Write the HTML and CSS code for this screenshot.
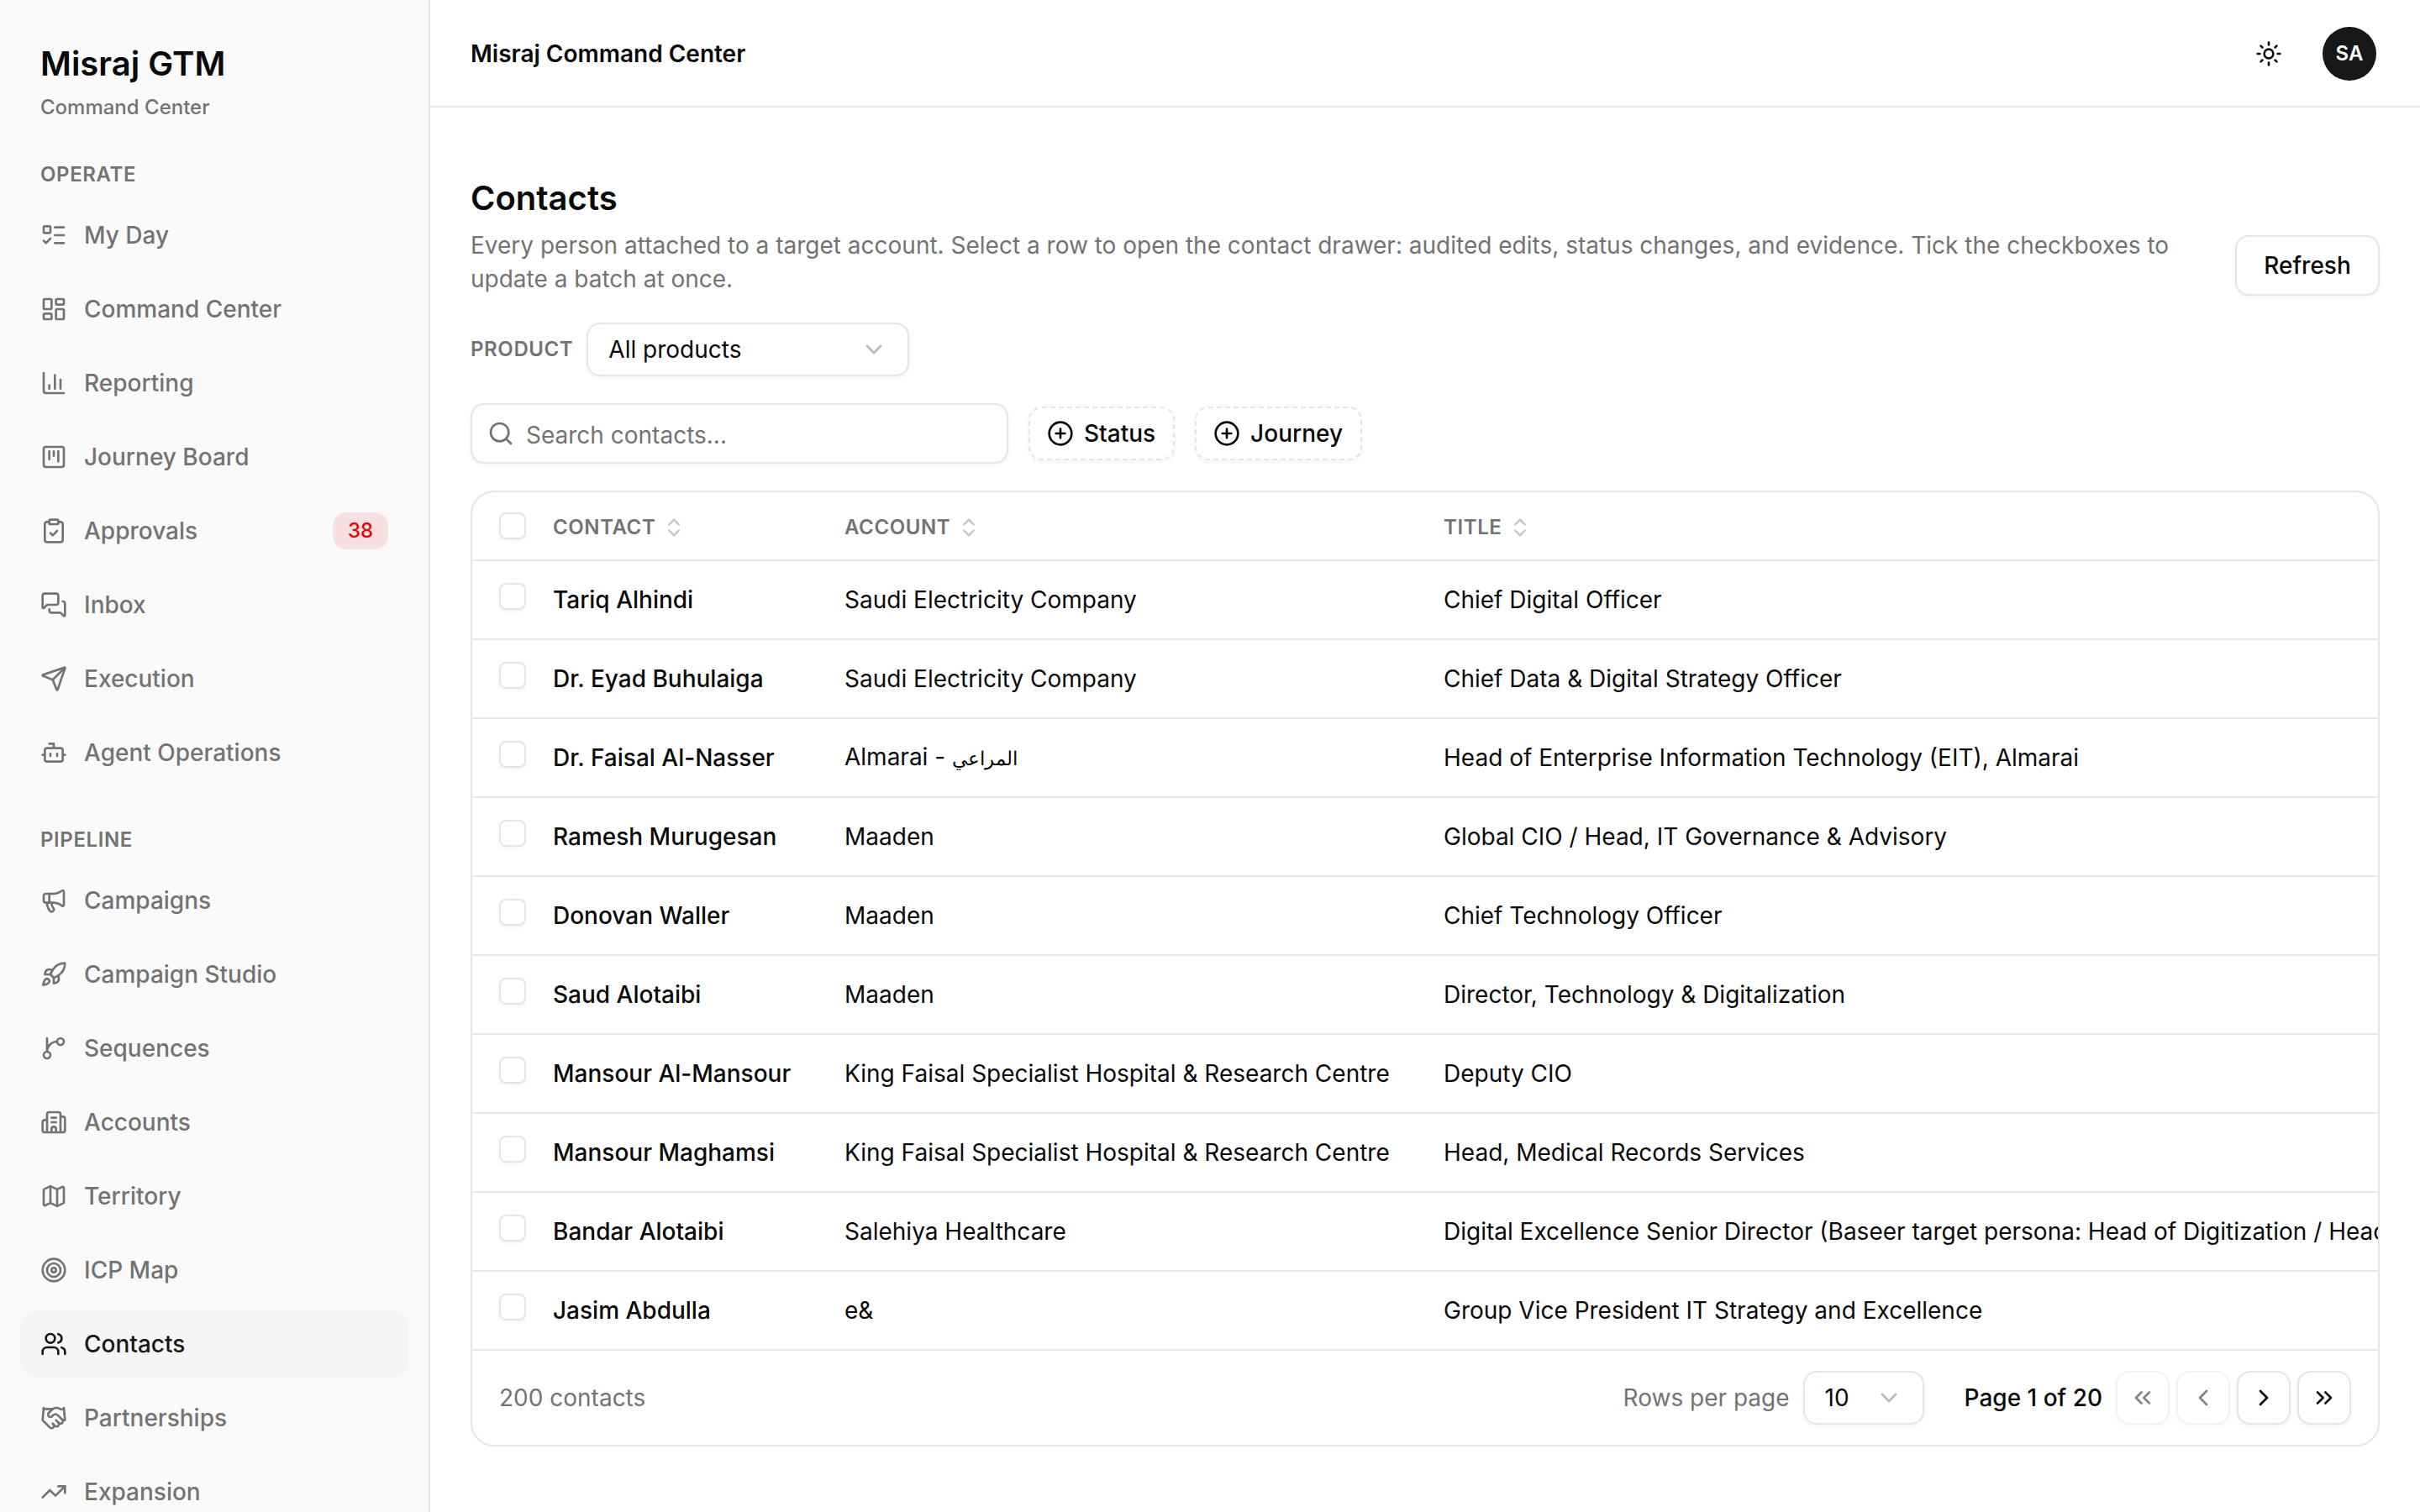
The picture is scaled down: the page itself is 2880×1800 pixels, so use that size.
FILE: index.html
```html
<!DOCTYPE html>
<html lang="en">
	<head>
		<meta charset="utf-8">
		<title>Misraj Command Center</title>
		<link rel="stylesheet" href="styles.css">
	</head>
	<body>
		<svg class="sprite">
			<symbol id="i-sort" viewBox="0 0 24 24"><path d="m7 15 5 5 5-5"/><path d="m7 9 5-5 5 5"/></symbol>
			<symbol id="i-down" viewBox="0 0 24 24"><path d="m6 9 6 6 6-6"/></symbol>
			<symbol id="i-plus" viewBox="0 0 24 24"><circle cx="12" cy="12" r="10"/><path d="M8 12h8M12 8v8"/></symbol>
		</svg>

		<div class="app">
			<aside class="sidebar">
				<div class="brand">
					<div class="brand-name">Misraj GTM</div>
					<div class="brand-sub">Command Center</div>
				</div>

				<nav class="group">
					<div class="group-label">Operate</div>
					<a class="nav-item"><svg class="icon" viewBox="0 0 24 24"><path d="M13 5h8M13 12h8M13 19h8M3 17l2 2 4-4"/><rect x="3" y="4" width="6" height="6" rx="1"/></svg>My Day</a>
					<a class="nav-item"><svg class="icon" viewBox="0 0 24 24"><rect width="7" height="9" x="3" y="3" rx="1"/><rect width="7" height="5" x="14" y="3" rx="1"/><rect width="7" height="9" x="14" y="12" rx="1"/><rect width="7" height="5" x="3" y="16" rx="1"/></svg>Command Center</a>
					<a class="nav-item"><svg class="icon" viewBox="0 0 24 24"><path d="M3 3v16a2 2 0 0 0 2 2h16M18 17V9M13 17V5M8 17v-3"/></svg>Reporting</a>
					<a class="nav-item"><svg class="icon" viewBox="0 0 24 24"><rect width="18" height="18" x="3" y="3" rx="2"/><path d="M8 7v7M12 7v4M16 7v9"/></svg>Journey Board</a>
					<a class="nav-item"><svg class="icon" viewBox="0 0 24 24"><rect width="8" height="4" x="8" y="2" rx="1"/><path d="M16 4h2a2 2 0 0 1 2 2v14a2 2 0 0 1-2 2H6a2 2 0 0 1-2-2V6a2 2 0 0 1 2-2h2"/><path d="m9 14 2 2 4-4"/></svg>Approvals<span class="badge">38</span></a>
					<a class="nav-item"><svg class="icon" viewBox="0 0 24 24"><path d="M16 10a2 2 0 0 1-2 2H6.828a2 2 0 0 0-1.414.586l-2.202 2.202A.71.71 0 0 1 2 14.286V4a2 2 0 0 1 2-2h10a2 2 0 0 1 2 2z"/><path d="M20 9a2 2 0 0 1 2 2v10.286a.71.71 0 0 1-1.212.502l-2.202-2.202A2 2 0 0 0 17.172 19H10a2 2 0 0 1-2-2v-1"/></svg>Inbox</a>
					<a class="nav-item"><svg class="icon" viewBox="0 0 24 24"><path d="M14.536 21.686a.5.5 0 0 0 .937-.024l6.5-19a.496.496 0 0 0-.635-.635l-19 6.5a.5.5 0 0 0-.024.937l7.93 3.18a2 2 0 0 1 1.112 1.11z"/><path d="m21.854 2.147-10.94 10.939"/></svg>Execution</a>
					<a class="nav-item"><svg class="icon" viewBox="0 0 24 24"><path d="M12 8V4H8"/><rect width="16" height="12" x="4" y="8" rx="2"/><path d="M2 14h2M20 14h2M15 13v2M9 13v2"/></svg>Agent Operations</a>
				</nav>

				<nav class="group">
					<div class="group-label">Pipeline</div>
					<a class="nav-item"><svg class="icon" viewBox="0 0 24 24"><path d="M11 6a13 13 0 0 0 8.4-2.8A1 1 0 0 1 21 4v12a1 1 0 0 1-1.6.8A13 13 0 0 0 11 14H5a2 2 0 0 1-2-2V8a2 2 0 0 1 2-2z"/><path d="M6 14a12 12 0 0 0 2.4 7.2 2 2 0 0 0 3.2-2.4A8 8 0 0 1 10 14"/><path d="M8 6v8"/></svg>Campaigns</a>
					<a class="nav-item"><svg class="icon" viewBox="0 0 24 24"><path d="M12 15v5s3.03-.55 4-2c1.08-1.62 0-5 0-5"/><path d="M4.5 16.5c-1.5 1.26-2 5-2 5s3.74-.5 5-2c.71-.84.7-2.13-.09-2.91a2.18 2.18 0 0 0-2.91-.09"/><path d="M9 12a22 22 0 0 1 2-3.95A12.88 12.88 0 0 1 22 2c0 2.72-.78 7.5-6 11a22.4 22.4 0 0 1-4 2z"/><path d="M9 12H4s.55-3.03 2-4c1.62-1.08 5 .05 5 .05"/></svg>Campaign Studio</a>
					<a class="nav-item"><svg class="icon" viewBox="0 0 24 24"><path d="M15 6a9 9 0 0 0-9 9V3"/><circle cx="18" cy="6" r="3"/><circle cx="6" cy="18" r="3"/></svg>Sequences</a>
					<a class="nav-item"><svg class="icon" viewBox="0 0 24 24"><path d="M10 12h4M10 8h4M14 21v-3a2 2 0 0 0-4 0v3"/><path d="M6 10H4a2 2 0 0 0-2 2v7a2 2 0 0 0 2 2h16a2 2 0 0 0 2-2V9a2 2 0 0 0-2-2h-2"/><path d="M6 21V5a2 2 0 0 1 2-2h8a2 2 0 0 1 2 2v16"/></svg>Accounts</a>
					<a class="nav-item"><svg class="icon" viewBox="0 0 24 24"><path d="M14.106 5.553a2 2 0 0 0 1.788 0l3.659-1.83A1 1 0 0 1 21 4.619v12.764a1 1 0 0 1-.553.894l-4.553 2.277a2 2 0 0 1-1.788 0l-4.212-2.106a2 2 0 0 0-1.788 0l-3.659 1.83A1 1 0 0 1 3 19.381V6.618a1 1 0 0 1 .553-.894l4.553-2.277a2 2 0 0 1 1.788 0z"/><path d="M15 5.764v15M9 3.236v15"/></svg>Territory</a>
					<a class="nav-item"><svg class="icon" viewBox="0 0 24 24"><circle cx="12" cy="12" r="10"/><circle cx="12" cy="12" r="6"/><circle cx="12" cy="12" r="2"/></svg>ICP Map</a>
					<a class="nav-item active"><svg class="icon" viewBox="0 0 24 24"><path d="M16 21v-2a4 4 0 0 0-4-4H6a4 4 0 0 0-4 4v2"/><path d="M16 3.128a4 4 0 0 1 0 7.744"/><path d="M22 21v-2a4 4 0 0 0-3-3.87"/><circle cx="9" cy="7" r="4"/></svg>Contacts</a>
					<a class="nav-item"><svg class="icon" viewBox="0 0 24 24"><path d="m11 17 2 2a1 1 0 1 0 3-3"/><path d="m14 14 2.5 2.5a1 1 0 1 0 3-3l-3.88-3.88a3 3 0 0 0-4.24 0l-.88.88a1 1 0 1 1-3-3l2.81-2.81a5.79 5.79 0 0 1 7.06-.87l.47.28a2 2 0 0 0 1.42.25L21 4"/><path d="m21 3 1 11h-2"/><path d="M3 3 2 14l6.5 6.5a1 1 0 1 0 3-3"/><path d="M3 4h8"/></svg>Partnerships</a>
					<a class="nav-item"><svg class="icon" viewBox="0 0 24 24"><path d="M16 7h6v6"/><path d="m22 7-8.5 8.5-5-5L2 17"/></svg>Expansion</a>
				</nav>
			</aside>

			<div class="main">
				<header class="topbar">
					<div class="topbar-title">Misraj Command Center</div>
					<div class="topbar-actions">
						<button class="theme-btn"><svg class="icon" viewBox="0 0 24 24"><circle cx="12" cy="12" r="4"/><path d="M12 2v2M12 20v2m-7.07-17.07 1.41 1.41m11.32 11.32 1.41 1.41M2 12h2M20 12h2M6.34 17.66l-1.41 1.41M19.07 4.93l-1.41 1.41"/></svg></button>
						<div class="avatar">SA</div>
					</div>
				</header>

				<main class="content">
					<div class="page-head">
						<div class="page-text">
							<h1>Contacts</h1>
							<p>Every person attached to a target account. Select a row to open the contact drawer: audited edits, status changes, and evidence. Tick the checkboxes to update a batch at once.</p>
						</div>
						<button class="btn refresh">Refresh</button>
					</div>

					<div class="product-row">
						<span class="label">Product</span>
						<div class="select product-select">All products<svg class="icon dim"><use href="#i-down"/></svg></div>
					</div>

					<div class="toolbar">
						<div class="search">
							<svg class="icon" viewBox="0 0 24 24"><path d="m21 21-4.34-4.34"/><circle cx="11" cy="11" r="8"/></svg>
							<span>Search contacts...</span>
						</div>
						<button class="btn filter"><svg class="icon"><use href="#i-plus"/></svg>Status</button>
						<button class="btn filter"><svg class="icon"><use href="#i-plus"/></svg>Journey</button>
					</div>

					<div class="card">
						<div class="table-wrap">
							<table>
								<colgroup><col class="c-check"><col class="c-contact"><col class="c-account"><col class="c-title"></colgroup>
								<thead>
									<tr>
										<th><div class="checkbox"></div></th>
										<th><div class="th">Contact<svg class="icon sort"><use href="#i-sort"/></svg></div></th>
										<th><div class="th">Account<svg class="icon sort"><use href="#i-sort"/></svg></div></th>
										<th><div class="th">Title<svg class="icon sort"><use href="#i-sort"/></svg></div></th>
									</tr>
								</thead>
								<tbody>
									<tr><td><div class="checkbox"></div></td><td class="name">Tariq Alhindi</td><td>Saudi Electricity Company</td><td>Chief Digital Officer</td></tr>
									<tr><td><div class="checkbox"></div></td><td class="name">Dr. Eyad Buhulaiga</td><td>Saudi Electricity Company</td><td>Chief Data &amp; Digital Strategy Officer</td></tr>
									<tr><td><div class="checkbox"></div></td><td class="name">Dr. Faisal Al-Nasser</td><td>Almarai - <span class="ar">المراعي</span></td><td>Head of Enterprise Information Technology (EIT), Almarai</td></tr>
									<tr><td><div class="checkbox"></div></td><td class="name">Ramesh Murugesan</td><td>Maaden</td><td>Global CIO / Head, IT Governance &amp; Advisory</td></tr>
									<tr><td><div class="checkbox"></div></td><td class="name">Donovan Waller</td><td>Maaden</td><td>Chief Technology Officer</td></tr>
									<tr><td><div class="checkbox"></div></td><td class="name">Saud Alotaibi</td><td>Maaden</td><td>Director, Technology &amp; Digitalization</td></tr>
									<tr><td><div class="checkbox"></div></td><td class="name">Mansour Al-Mansour</td><td>King Faisal Specialist Hospital &amp; Research Centre</td><td>Deputy CIO</td></tr>
									<tr><td><div class="checkbox"></div></td><td class="name">Mansour Maghamsi</td><td>King Faisal Specialist Hospital &amp; Research Centre</td><td>Head, Medical Records Services</td></tr>
									<tr><td><div class="checkbox"></div></td><td class="name">Bandar Alotaibi</td><td>Salehiya Healthcare</td><td>Digital Excellence Senior Director (Baseer target persona: Head of Digitization / Head</td></tr>
									<tr><td><div class="checkbox"></div></td><td class="name">Jasim Abdulla</td><td>e&amp;</td><td>Group Vice President IT Strategy and Excellence</td></tr>
								</tbody>
							</table>
						</div>

						<div class="card-foot">
							<span class="muted">200 contacts</span>
							<div class="pager">
								<div class="rows-per">
									<span class="muted">Rows per page</span>
									<div class="select size-select">10<svg class="icon dim"><use href="#i-down"/></svg></div>
								</div>
								<div class="pages">
									<span class="page-of">Page 1 of 20</span>
									<div class="page-btns">
										<button class="btn page-btn off"><svg class="icon" viewBox="0 0 24 24"><path d="m11 17-5-5 5-5M18 17l-5-5 5-5"/></svg></button>
										<button class="btn page-btn off"><svg class="icon" viewBox="0 0 24 24"><path d="m15 18-6-6 6-6"/></svg></button>
										<button class="btn page-btn"><svg class="icon" viewBox="0 0 24 24"><path d="m9 18 6-6-6-6"/></svg></button>
										<button class="btn page-btn"><svg class="icon" viewBox="0 0 24 24"><path d="m6 17 5-5-5-5M13 17l5-5-5-5"/></svg></button>
									</div>
								</div>
							</div>
						</div>
					</div>
				</main>
			</div>
		</div>
	</body>
</html>
```

FILE: styles.css
```css
* {
	box-sizing: border-box;
}

html, body {
	margin: 0;
	height: 100%;
	overflow: hidden;
}

body {
	background: #fff;
	color: #0a0a0a;
	font-family: Inter, "Noto Sans", sans-serif;
	font-size: 28px;
	line-height: 40px;
}

button {
	font: inherit;
	color: inherit;
	background: none;
	border: none;
	padding: 0;
}

.sprite {
	display: none;
}

.icon {
	width: 32px;
	height: 32px;
	flex-shrink: 0;
	fill: none;
	stroke: currentColor;
	stroke-width: 2;
	stroke-linecap: round;
	stroke-linejoin: round;
}

.dim {
	color: #737373;
	opacity: .5;
}

.muted {
	color: #737373;
}

.app {
	display: flex;
	height: 100%;
}

/* sidebar */

.sidebar {
	width: 512px;
	flex-shrink: 0;
	display: flex;
	flex-direction: column;
	gap: 48px;
	padding: 48px 24px;
	overflow: hidden;
	background: #fafafa;
	border-right: 2px solid #e5e5e5;
}

.brand {
	padding: 0 24px;
	display: flex;
	flex-direction: column;
	gap: 8px;
}

.brand-name {
	font-size: 40px;
	line-height: 56px;
	font-weight: 600;
}

.brand-sub {
	font-size: 24px;
	line-height: 32px;
	font-weight: 500;
	color: #737373;
}

.group {
	display: flex;
	flex-direction: column;
	gap: 8px;
}

.group-label {
	padding: 0 24px;
	margin-bottom: 8px;
	font-size: 24px;
	line-height: 32px;
	font-weight: 600;
	letter-spacing: .025em;
	text-transform: uppercase;
	color: #737373;
}

.nav-item {
	display: flex;
	align-items: center;
	gap: 20px;
	height: 80px;
	padding: 0 24px;
	flex-shrink: 0;
	border-radius: 20px;
	font-weight: 500;
	color: #737373;
}

.nav-item.active {
	background: #f5f5f5;
	color: #171717;
}

.badge {
	margin-left: auto;
	width: 66px;
	height: 44px;
	border-radius: 16px;
	background: rgba(231, 0, 11, .1);
	color: #e7000b;
	font-size: 24px;
	line-height: 43px;
	text-align: center;
}

/* top bar */

.main {
	flex: 1;
	min-width: 0;
}

.topbar {
	display: flex;
	align-items: center;
	justify-content: space-between;
	height: 128px;
	padding: 2px 52px 0 48px;
	border-bottom: 2px solid #e5e5e5;
}

.topbar-title {
	font-weight: 600;
}

.topbar-actions {
	display: flex;
	align-items: center;
	gap: 28px;
}

.theme-btn {
	display: flex;
	align-items: center;
	justify-content: center;
	width: 72px;
	height: 72px;
}

.avatar {
	width: 64px;
	height: 64px;
	border-radius: 50%;
	background: #171717;
	color: #fafafa;
	font-size: 24px;
	font-weight: 600;
	line-height: 63px;
	text-align: center;
}

/* page */

.content {
	padding: 80px 48px 0;
}

.page-head {
	display: flex;
	align-items: flex-end;
	justify-content: space-between;
	gap: 32px;
}

.page-text {
	flex: 1;
}

h1 {
	margin: 0 0 8px;
	font-size: 40px;
	line-height: 56px;
	font-weight: 600;
}

p {
	margin: 0;
	max-width: 2068px;
	color: #737373;
}

.btn {
	display: flex;
	align-items: center;
	justify-content: center;
	border: 2px solid #e5e5e5;
	border-radius: 16px;
	background: #fff;
	box-shadow: 0 2px 4px rgba(0, 0, 0, .05);
	font-weight: 500;
}

.refresh {
	width: 172px;
	height: 72px;
}

.product-row {
	display: flex;
	align-items: center;
	gap: 16px;
	margin-top: 32px;
}

.label {
	font-size: 24px;
	font-weight: 600;
	letter-spacing: .025em;
	text-transform: uppercase;
	color: #737373;
}

.select {
	display: flex;
	align-items: center;
	justify-content: space-between;
	height: 64px;
	padding: 0 24px;
	border: 2px solid #e5e5e5;
	border-radius: 16px;
	box-shadow: 0 2px 4px rgba(0, 0, 0, .05);
}

.product-select {
	width: 384px;
}

.toolbar {
	display: flex;
	align-items: center;
	gap: 24px;
	margin-top: 32px;
}

.search {
	display: flex;
	align-items: center;
	gap: 14px;
	width: 640px;
	height: 72px;
	padding: 0 18px;
	border: 2px solid #e5e5e5;
	border-radius: 16px;
	box-shadow: 0 2px 4px rgba(0, 0, 0, .05);
	color: #737373;
}

.search span {
	padding-top: 3px;
}

.filter {
	height: 64px;
	padding: 0 21px 0 20px;
	gap: 12px;
	border-style: dashed;
}

/* table */

.card {
	margin-top: 32px;
	border: 2px solid #e5e5e5;
	border-radius: 28px;
	overflow: hidden;
}

.table-wrap {
	overflow: hidden;
}

table {
	width: 100%;
	table-layout: fixed;
	border-collapse: separate;
	border-spacing: 0;
}

.c-check {
	width: 64px;
}

.c-contact {
	width: 347px;
}

.c-account {
	width: 713px;
}

th, td {
	padding: 0 32px;
	border-bottom: 2px solid #e5e5e5;
	text-align: left;
	white-space: nowrap;
	overflow: hidden;
}

th {
	height: 82px;
	font-size: 24px;
	font-weight: 600;
	letter-spacing: .025em;
	text-transform: uppercase;
	color: #737373;
}

td {
	height: 94px;
}

th:first-child, td:first-child {
	padding-right: 0;
}

td:last-child {
	padding-right: 0;
}

td:first-child {
	padding-bottom: 8px;
}

.th {
	display: flex;
	align-items: center;
	gap: 8px;
	padding-top: 3px;
}

.sort {
	width: 28px;
	height: 28px;
	opacity: .4;
}

.name {
	font-weight: 500;
}

.ar {
	font-size: 23px;
}

.checkbox {
	width: 32px;
	height: 32px;
	border: 2px solid #e5e5e5;
	border-radius: 8px;
	box-shadow: 0 2px 4px rgba(0, 0, 0, .05);
}

.card-foot {
	display: flex;
	align-items: center;
	justify-content: space-between;
	padding: 24px 32px;
}

.pager {
	display: flex;
	align-items: center;
	gap: 48px;
}

.rows-per, .pages {
	display: flex;
	align-items: center;
	gap: 16px;
}

.size-select {
	width: 144px;
}

.page-of {
	font-weight: 500;
}

.page-btns {
	display: flex;
	gap: 8px;
}

.page-btn {
	width: 64px;
	height: 64px;
}

.page-btn.off {
	opacity: .5;
}
```
